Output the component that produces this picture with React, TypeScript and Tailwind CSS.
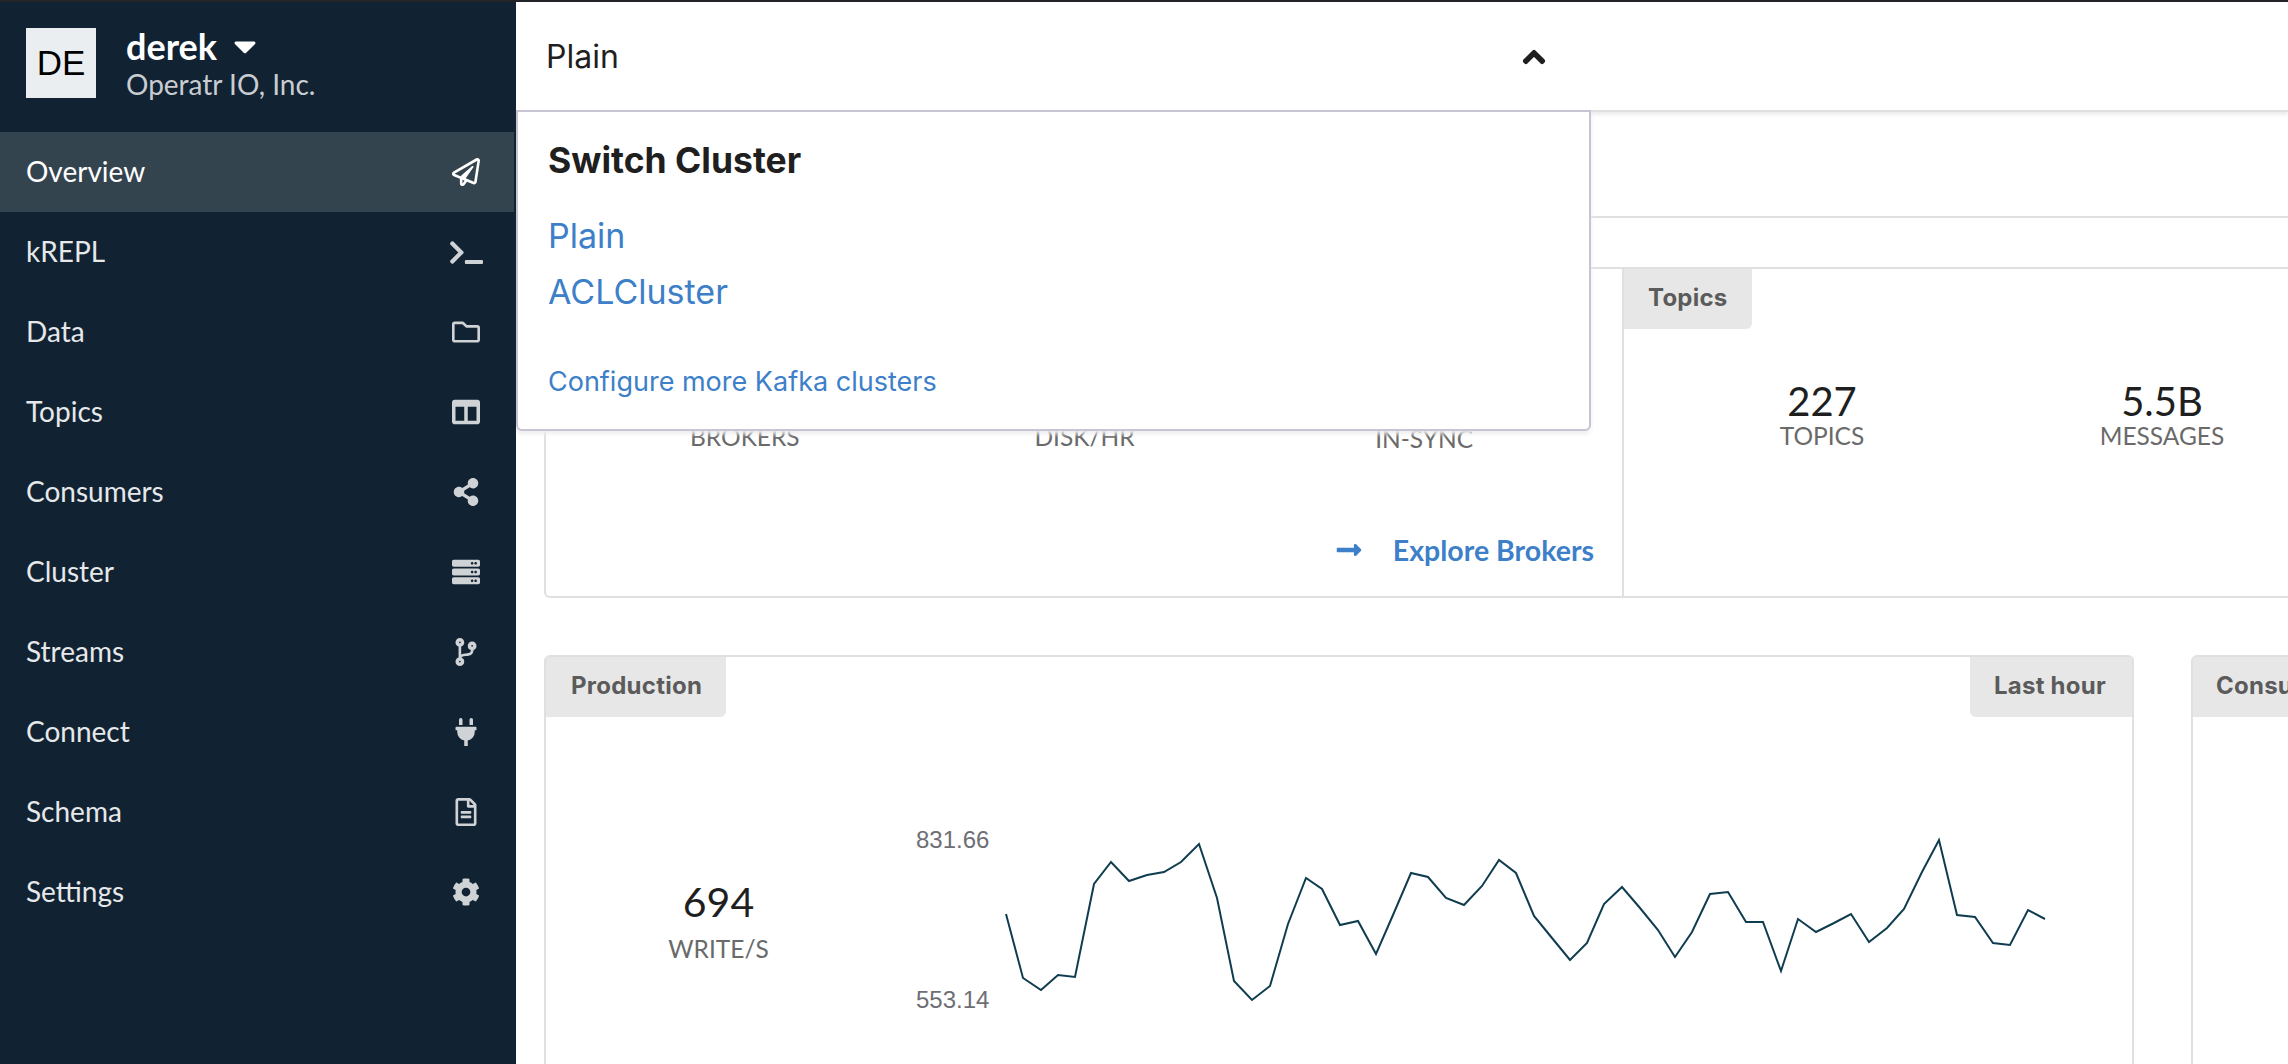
import {
  FaCaretDown,
  FaChevronUp,
  FaCodeBranch,
  FaCog,
  FaColumns,
  FaLongArrowAltRight,
  FaPlug,
  FaRegFileAlt,
  FaRegFolder,
  FaRegPaperPlane,
  FaServer,
  FaShareAlt,
  FaTerminal,
} from "react-icons/fa";

const navItems = [
  { label: "Overview", icon: FaRegPaperPlane, size: "h-7 w-auto", active: true },
  { label: "kREPL", icon: FaTerminal, size: "h-[33px] w-auto" },
  { label: "Data", icon: FaRegFolder, size: "h-7 w-auto" },
  { label: "Topics", icon: FaColumns, size: "h-7 w-auto" },
  { label: "Consumers", icon: FaShareAlt, size: "h-7 w-auto" },
  { label: "Cluster", icon: FaServer, size: "h-7 w-auto" },
  { label: "Streams", icon: FaCodeBranch, size: "h-7 w-auto" },
  { label: "Connect", icon: FaPlug, size: "h-7 w-auto" },
  { label: "Schema", icon: FaRegFileAlt, size: "h-7 w-auto" },
  { label: "Settings", icon: FaCog, size: "h-7 w-auto" },
];

// chart points, read off the reference
const linePoints = [
  [1006, 914], [1023, 978], [1041, 990], [1058, 975], [1075, 977], [1094, 884], [1111, 862], [1129, 881],
  [1147, 875], [1164, 872], [1181, 862], [1199, 844], [1217, 898], [1234, 981], [1252, 1000], [1270, 986],
  [1288, 924], [1306, 878], [1322, 889], [1340, 925], [1358, 921], [1376, 954], [1393, 915], [1411, 873],
  [1428, 877], [1446, 898], [1464, 905], [1482, 886], [1499, 860], [1516, 873], [1534, 916], [1552, 938],
  [1570, 960], [1587, 943], [1604, 904], [1622, 887], [1640, 908], [1658, 930], [1675, 957], [1692, 932],
  [1710, 894], [1728, 892], [1746, 922], [1763, 922], [1781, 971], [1798, 919], [1816, 932], [1834, 923],
  [1851, 914], [1869, 942], [1887, 928], [1904, 909], [1922, 872], [1939, 840], [1957, 915], [1975, 917],
  [1993, 943], [2010, 945], [2028, 910], [2045, 919],
];

const Sidebar = () => (
  <aside className="w-[516px] shrink-0 bg-[#112333] font-['Lato',sans-serif]">
    {/* Account */}
    <div className="h-[130px] pl-[26px] pt-[26px] flex gap-[30px]">
      <div className="w-[70px] h-[70px] bg-[#ebeef1] flex items-center justify-center font-['Liberation_Sans',sans-serif] text-[35px] text-black">
        DE
      </div>
      <div>
        <div className="flex items-center gap-[10px] h-[40px] mt-[-2px] text-white text-[36px] font-bold leading-[40px]">
          derek
          <FaCaretDown className="h-9 w-auto" />
        </div>
        <div className="text-[#c9cdd1] text-[28px] leading-[36px]">Operatr IO, Inc.</div>
      </div>
    </div>

    {/* Nav */}
    <nav>
      {navItems.map(({ label, icon: Icon, size, active }) => (
        <div
          key={label}
          className={
            active
              ? "h-20 mr-[2px] pl-[26px] pr-5 flex items-center justify-between bg-[#34444f] text-white"
              : "h-20 mr-[2px] pl-[26px] pr-5 flex items-center justify-between text-[#e6e8ea]"
          }
        >
          <span className="text-[28px] pb-[2px]">{label}</span>
          <span className={active ? "w-14 flex justify-center text-white" : "w-14 flex justify-center text-[#d0d3d6]"}>
            <Icon className={size} />
          </span>
        </div>
      ))}
    </nav>
  </aside>
);

const TabLabel = ({ children, padding }: { children: string; padding: string }) => (
  <div
    className={`w-fit h-[60px] ${padding} pb-[2px] flex items-center rounded-br-md bg-[#e7e7e7] text-[#5b5b5b] text-[24px] tracking-[0.25px] font-bold font-['Inter',sans-serif]`}
  >
    {children}
  </div>
);

const Stat = ({ value, label }: { value: string; label: string }) => (
  <div className="w-[340px] flex flex-col items-center">
    <div className="text-[40px] leading-[40px] text-[#1f1f1f]">{value}</div>
    <div className="text-[24.5px] leading-[30px] text-[#6a6a6a]">{label}</div>
  </div>
);

const ClusterMenu = () => (
  <div className="absolute left-0 top-[108px] z-10 w-[1075px] h-[321px] pl-[30px] bg-white border-2 border-[#c8c4d4] rounded-b-md shadow-[0_3px_4px_#eeeeee] font-['Inter',sans-serif]">
    <h2 className="mt-[29px] text-[35.5px] leading-[40px] font-bold text-[#1f1f1f]">Switch Cluster</h2>
    <div className="mt-[27px] text-[34px] leading-[56px] text-[#3d7fc8]">
      <div>Plain</div>
      <div>ACLCluster</div>
    </div>
    <div className="mt-[44px] text-[27px] leading-[36px] text-[#3d7fc8]">Configure more Kafka clusters</div>
  </div>
);

const App = () => {
  return (
    <div className="w-[2288px] h-[1064px] overflow-hidden bg-white flex flex-col font-['Lato',sans-serif]">
      <div className="h-[2px] shrink-0 bg-[#222427]" />
      <div className="flex-1 flex min-h-0">
        <Sidebar />

        <main className="relative flex-1 min-w-0 overflow-hidden">
          {/* Cluster switch */}
          <header className="relative h-[110px] pl-[30px] pr-[742px] pt-[2px] flex items-center justify-between border-b-2 border-[#e0e0e0] shadow-[0_3px_3px_#eeeeee] font-['Inter',sans-serif]">
            <span className="text-[32px] text-[#1f1f1f]">Plain</span>
            <FaChevronUp className="h-6 w-auto text-[#1f1f1f]" stroke="currentColor" strokeWidth={40} />
          </header>
          <ClusterMenu />

          <div className="h-[106px] border-b-2 border-[#e0e0e0]" />
          <div className="h-[49px]" />

          {/* Brokers + topics */}
          <section className="ml-[28px] h-[331px] flex border-2 border-r-0 border-[#e0e0e0] rounded-bl-md">
            <div className="w-[1076px] shrink-0 pl-[29px] pr-7 pt-[153px]">
              <div className="flex text-[24.5px] leading-[30px] text-[#6a6a6a]">
                <div className="w-[340px] text-center">BROKERS</div>
                <div className="w-[340px] text-center">DISK/HR</div>
                <div className="w-[340px] text-center mt-[2px]">IN-SYNC</div>
              </div>
              <div className="mt-[79px] flex items-center justify-end gap-[30px] text-[#3d7fc8] text-[28.5px] leading-[34px] font-bold">
                <FaLongArrowAltRight className="h-7 w-auto" />
                <span>Explore Brokers</span>
              </div>
            </div>
            <div className="flex-1 border-l-2 border-[#e0e0e0]">
              <TabLabel padding="px-6">Topics</TabLabel>
              <div className="mt-[52px] pl-[28px] flex">
                <Stat value="227" label="TOPICS" />
                <Stat value="5.5B" label="MESSAGES" />
              </div>
            </div>
          </section>

          {/* Production + consumption */}
          <div className="mt-[57px] ml-[28px] flex gap-[57px]">
            <section className="w-[1590px] h-[500px] shrink-0 border-2 border-b-0 border-[#e0e0e0] rounded-t-md">
              <div className="flex justify-between">
                <TabLabel padding="pl-[25px] pr-6">Production</TabLabel>
                <div className="h-[60px] pl-6 pr-[26px] pb-[2px] flex items-center rounded-bl-md bg-[#e7e7e7] text-[#5b5b5b] text-[24px] tracking-[0.25px] font-bold font-['Inter',sans-serif]">
                  Last hour
                </div>
              </div>
              <div className="flex pt-[109px]">
                <div className="w-[345px] shrink-0 pt-[52px] flex flex-col items-center">
                  <div className="text-[41px] leading-[48px] text-[#1f1f1f]">694</div>
                  <div className="mt-2 text-[24.5px] leading-[30px] text-[#6a6a6a]">WRITE/S</div>
                </div>
                <div className="ml-[25px] w-[73px] h-[188px] shrink-0 flex flex-col justify-between font-['Liberation_Sans',sans-serif] text-[24px] leading-7 text-[#6e6e75]">
                  <div>831.66</div>
                  <div>553.14</div>
                </div>
                <svg className="ml-[15px] mt-[9px] shrink-0" width="1046" height="170" viewBox="1004 835 1046 170" fill="none">
                  <polyline points={linePoints.map((p) => p.join(",")).join(" ")} stroke="#0f3d4f" strokeWidth="2" />
                </svg>
              </div>
            </section>
            <section className="w-[500px] h-[500px] shrink-0 border-2 border-b-0 border-[#e0e0e0] rounded-t-md">
              <TabLabel padding="pl-[23px] pr-6">Consumption</TabLabel>
            </section>
          </div>
        </main>
      </div>
    </div>
  );
};

export default App;
